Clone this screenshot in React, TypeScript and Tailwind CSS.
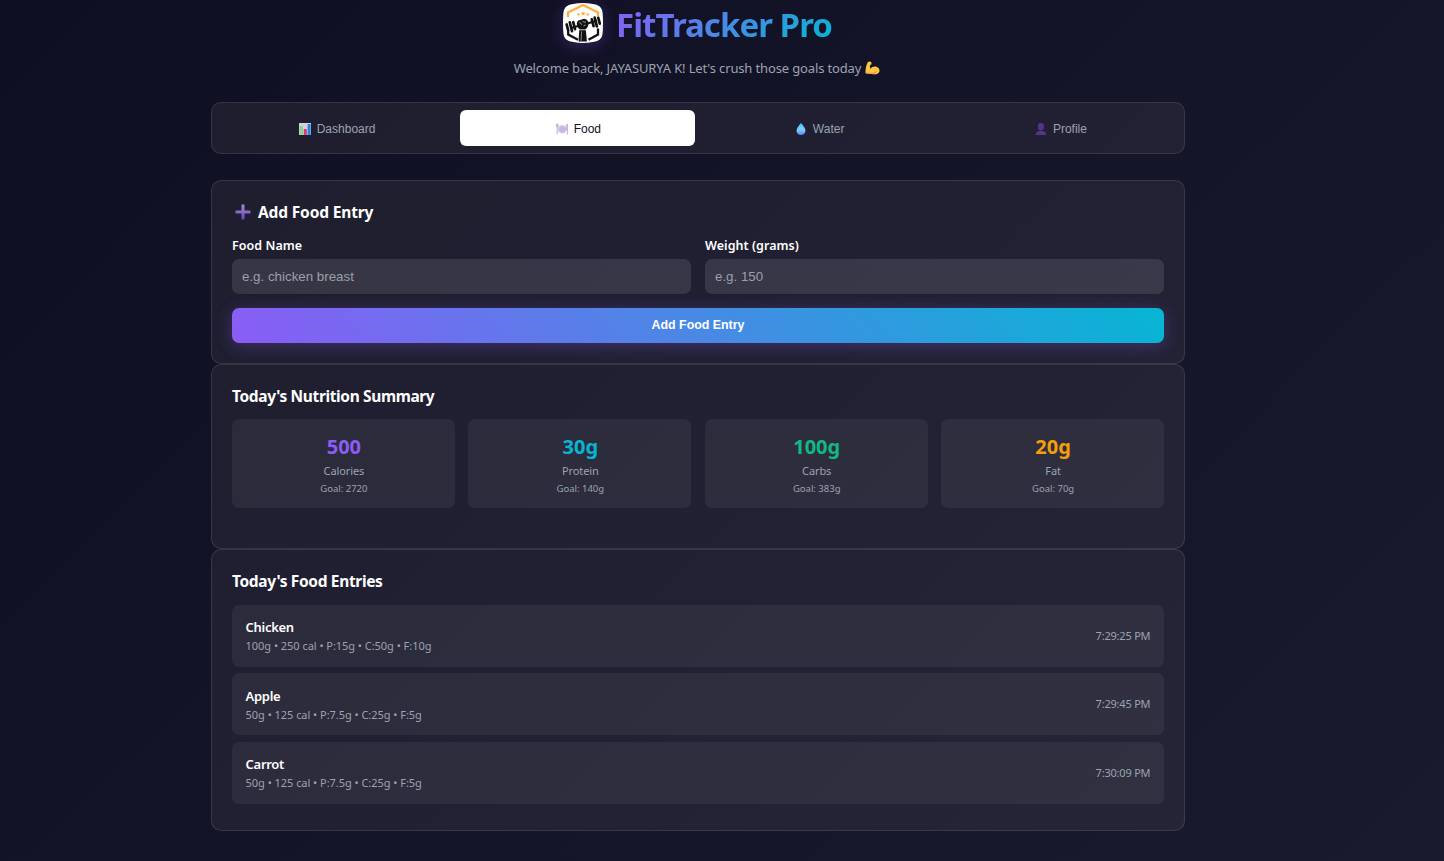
import React from "react";

const UI = "font-['Noto_Sans','Segoe_UI',sans-serif]";
const ARIAL = "font-['Liberation_Sans',Arial,sans-serif]";

function Star({ x, y, r }: { x: number; y: number; r: number }) {
  return (
    <path
      transform={`translate(${x} ${y}) scale(${r})`}
      d="M0-1 .26-.34 .95-.31 .41 .12 .59 .81 0 .42-.59 .81-.41 .12-.95-.31-.26-.34Z"
      fill="#fbb03b"
    />
  );
}

function Logo() {
  return (
    <svg viewBox="0 0 40 40" className="size-10 shrink-0 rounded-[10px] shadow-[0_3px_14px_rgba(139,92,246,0.25)]">
      <path d="M10 1Q20-1 30 1Q38 2 39.500 8Q40.500 20 39.500 32Q38 38 30 39Q20 41 10 39Q2 38 .5 32Q-.5 20 .5 8Q2 2 10 1Z" fill="#fff" />
      <path d="M5 14V9.400L20 2L35 9.400V14" fill="none" stroke="#fbb03b" strokeWidth="2.300" />
      <path d="M5.200 27.500V31.500L15 36.700M35 25.500V31.500L25.500 36.700" fill="none" stroke="#111" strokeWidth="2.300" />
      <Star x={20.100} y={10.600} r={2.700} />
      <Star x={15.500} y={11.400} r={2} />
      <Star x={24.700} y={11.400} r={2} />
      <path d="M8 25 34 17.800" stroke="#111" strokeWidth="2" />
      <path d="m3.700 21.500 1.400 5.500M6.800 19.300l2.200 8.900M10.200 19.200l1.800 7M28.800 16.300l1.800 6.800M31.700 14.600l2.200 8.800M35.300 15l1.500 5.700" stroke="#111" strokeWidth="2.700" strokeLinecap="round" />
      <path d="M13.800 20.500Q14 17.300 17.300 16.900L21 15.800Q25.200 16.300 25.500 20.500Q25.200 24.700 22.200 26.500H17Q14 24.500 13.800 20.500Z" fill="#111" />
      <path d="M16.300 19.500q2 .3 2.400 2.300M19.500 18.300q1.500 1.300 3.400.7M20.500 22.800l2-.8" stroke="#fff" strokeWidth=".6" fill="none" />
      <path d="M16.200 27.300H22.900L23.900 38.500H15.600Z" fill="#111" />
      <path d="M18.600 28.500 18 38" stroke="#fff" strokeWidth=".5" />
    </svg>
  );
}

function Muscle() {
  return (
    <svg viewBox="0 0 16 15" className="h-[14px] w-[15px]">
      <path d="M3 1.200Q5 .1 6.700 1.200L7 3.400 5.200 4.500 5.600 8.200Q8 5.500 11.500 6Q15.700 7 15.500 11Q14.700 14.300 10 14.300L1.500 13.500Q.2 13.200.5 10Q1 5 3 1.200Z" fill="#ffc83d" />
      <path d="M.5 11.500Q5 13.300 9 12.300Q12.500 11.500 13 9.500Q13 12.800 9.500 14.300L1.500 13.500Q.3 13.100.5 11.500Z" fill="#f59a58" />
    </svg>
  );
}

function ChartIcon() {
  return (
    <svg viewBox="0 0 12 12" className="size-3">
      <path d="M0 0H12V12H0Z" fill="#d8cfe4" />
      <path d="M.7 3H4V12H.7Z" fill="#86d982" />
      <path d="M4.800 6H7.800V12H4.800Z" fill="#e6317a" />
      <path d="M8.600 1H11.600V12H8.600Z" fill="#2386dd" />
    </svg>
  );
}

function PlateIcon() {
  return (
    <svg viewBox="0 0 12 12" className="size-3">
      <circle cx="6.200" cy="6.200" r="4.300" fill="#d4c6ee" />
      <circle cx="6.200" cy="6.200" r="2.600" fill="#c6b5e8" />
      <path d="M.3.8V3.500Q1.200 5 2.100 3.500V.8M1.200.8V11.500M11.300 11.500V1Q10 2 10 6.500H11.300" stroke="#a99bb8" strokeWidth=".8" fill="none" />
    </svg>
  );
}

function DropIcon() {
  return (
    <svg viewBox="0 0 12 12" className="size-3">
      <defs>
        <linearGradient id="drop" x1="0" y1="0" x2="0" y2="1">
          <stop offset="0" stopColor="#4fc3f0" />
          <stop offset=".55" stopColor="#7ccfff" />
          <stop offset="1" stopColor="#6c7cf5" />
        </linearGradient>
      </defs>
      <path d="M6 0Q10.500 5 10.500 8A4.500 4 0 0 1 1.500 8Q1.500 5 6 0Z" fill="url(#drop)" />
    </svg>
  );
}

function PersonIcon() {
  return (
    <svg viewBox="0 0 12 12" className="size-3">
      <path d="M6 0Q9 0 9 3.500T6 7.500T3 3.500T6 0Z" fill="#57348a" />
      <path d="M.7 12Q.7 8.500 4.500 8H7.500Q11.300 8.500 11.300 12Z" fill="#57348a" />
    </svg>
  );
}

function PlusIcon() {
  return (
    <svg viewBox="0 0 16 16" className="size-4">
      <defs>
        <linearGradient id="plus" x1="0" y1="0" x2="0" y2="1">
          <stop offset="0" stopColor="#a18fc9" />
          <stop offset=".5" stopColor="#8a68c8" />
          <stop offset="1" stopColor="#6f3fd0" />
        </linearGradient>
      </defs>
      <path d="M7 .5H9Q9.500.5 9.500 1V6.500H15Q15.500 6.500 15.500 7V9Q15.500 9.500 15 9.500H9.500V15Q9.500 15.500 9 15.500H7Q6.500 15.500 6.500 15V9.500H1Q.5 9.500.5 9V7Q.5 6.500 1 6.500H6.500V1Q6.500.5 7 .5Z" fill="url(#plus)" />
    </svg>
  );
}

const tabs = [
  { label: "Dashboard", icon: <ChartIcon />, active: false },
  { label: "Food", icon: <PlateIcon />, active: true },
  { label: "Water", icon: <DropIcon />, active: false },
  { label: "Profile", icon: <PersonIcon />, active: false },
];

const stats = [
  { value: "500", label: "Calories", goal: "Goal: 2720", color: "text-[#8b5cf6]" },
  { value: "30g", label: "Protein", goal: "Goal: 140g", color: "text-[#06b6d4]" },
  { value: "100g", label: "Carbs", goal: "Goal: 383g", color: "text-[#10b981]" },
  { value: "20g", label: "Fat", goal: "Goal: 70g", color: "text-[#f59e0b]" },
];

const entries = [
  { name: "Chicken", detail: "100g • 250 cal • P:15g • C:50g • F:10g", time: "7:29:25 PM" },
  { name: "Apple", detail: "50g • 125 cal • P:7.5g • C:25g • F:5g", time: "7:29:45 PM" },
  { name: "Carrot", detail: "50g • 125 cal • P:7.5g • C:25g • F:5g", time: "7:30:09 PM" },
];

const card = "rounded-[10px] border border-white/10 bg-[#fffae6]/[0.056] px-5";
const heading = "text-[15.500px] font-bold leading-5 text-white";

function Field({ label, placeholder }: { label: string; placeholder: string }) {
  return (
    <label className="flex flex-col gap-1">
      <span className="text-[12.500px] font-semibold leading-[18px] tracking-[0.05px] text-white">{label}</span>
      <input
        placeholder={placeholder}
        className={`${ARIAL} h-[35px] w-full rounded-[7px] bg-[#fffaf5]/[0.11] px-[10px] text-[13.330px] text-white outline-none placeholder:text-[#9a9fab]`}
      />
    </label>
  );
}

export default function App() {
  return (
    <div className={`${UI} h-[861px] overflow-hidden bg-[linear-gradient(135deg,#0f0f23_0%,#1a1a2e_100%)] pr-12`}>
      <div className="mx-auto w-[974px]">
        <header className="flex h-[102px] flex-col items-center pt-[3px]">
          <div className="mr-px flex h-10 items-center gap-[13px]">
            <Logo />
            <h1 className="bg-[linear-gradient(135deg,#8b5cf6,#06b6d4)] bg-clip-text pt-[3px] text-[33px] font-bold leading-10 tracking-[-0.950px] text-transparent">
              FitTracker Pro
            </h1>
          </div>
          <p className="mr-[2px] mt-[15px] flex items-center gap-1 text-[13px] leading-5 tracking-[-0.140px] text-[#9ca3af]">
            <span>Welcome back, JAYASURYA K! Let's crush those goals today</span>
            <Muscle />
          </p>
        </header>

        <nav className="grid h-[52px] grid-cols-4 gap-[6.800px] rounded-[10px] border border-white/10 bg-[#fffae6]/[0.056] px-[6.800px] py-[7px]">
          {tabs.map((t) => (
            <button
              key={t.label}
              className={`${ARIAL} flex h-9 items-center justify-center gap-[6px] rounded-[6px] pl-[2px] pt-[2px] text-[12px] ${t.active ? "bg-white text-[#0f0f23]" : "text-[#9ca3af]"}`}
            >
              {t.icon}
              <span>{t.label}</span>
            </button>
          ))}
        </nav>

        <main className="mt-[26px]">
          <section className={`${card} h-[184px] pt-[21px]`}>
            <h2 className={`${heading} flex items-center gap-[7px] pl-[3px] tracking-[-0.150px]`}>
              <PlusIcon />
              <span>Add Food Entry</span>
            </h2>
            <div className="mt-[15px] grid grid-cols-2 gap-[14px]">
              <Field label="Food Name" placeholder="e.g. chicken breast" />
              <Field label="Weight (grams)" placeholder="e.g. 150" />
            </div>
            <button
              className={`${ARIAL} mt-[14px] h-[35px] w-full rounded-[7px] bg-[linear-gradient(45deg,#8b5cf6,#06b6d4)] text-[12.400px] font-bold text-white shadow-[0_3px_17px_rgba(139,92,246,0.3)]`}
            >
              Add Food Entry
            </button>
          </section>

          <section className={`${card} h-[185px] pt-[21px]`}>
            <h2 className={`${heading} tracking-[-0.370px]`}>Today's Nutrition Summary</h2>
            <div className="mt-[13px] grid grid-cols-4 gap-[13.600px]">
              {stats.map((s) => (
                <div key={s.label} className="flex h-[89px] flex-col items-center rounded-[7px] bg-[#fff7f2]/[0.056] pl-px pt-[14px]">
                  <div className={`${s.color} text-[20px] font-bold leading-7`}>{s.value}</div>
                  <div className="mt-[2px] text-[11px] leading-4 tracking-[-0.100px] text-[#9ca3af]">{s.label}</div>
                  <div className="mt-[2px] text-[9.500px] leading-4 text-[#9ca3af]">{s.goal}</div>
                </div>
              ))}
            </div>
          </section>

          <section className={`${card} h-[282px] pt-[21px]`}>
            <h2 className={`${heading} tracking-[-0.340px]`}>Today's Food Entries</h2>
            <ul className="mt-[14px] flex flex-col gap-[6.400px]">
              {entries.map((e) => (
                <li key={e.name} className="flex h-[62px] items-center justify-between rounded-[7px] bg-[#fff7f2]/[0.056] px-[13.600px] pt-[0.500px]">
                  <div>
                    <div className="text-[13px] font-semibold leading-5 tracking-[-0.300px] text-white">{e.name}</div>
                    <div className="text-[11px] leading-[18px] tracking-[-0.040px] text-[#9ca3af]">{e.detail}</div>
                  </div>
                  <time className="text-[11px] tracking-[-0.200px] text-[#9ca3af]">{e.time}</time>
                </li>
              ))}
            </ul>
          </section>
        </main>
      </div>
    </div>
  );
}
